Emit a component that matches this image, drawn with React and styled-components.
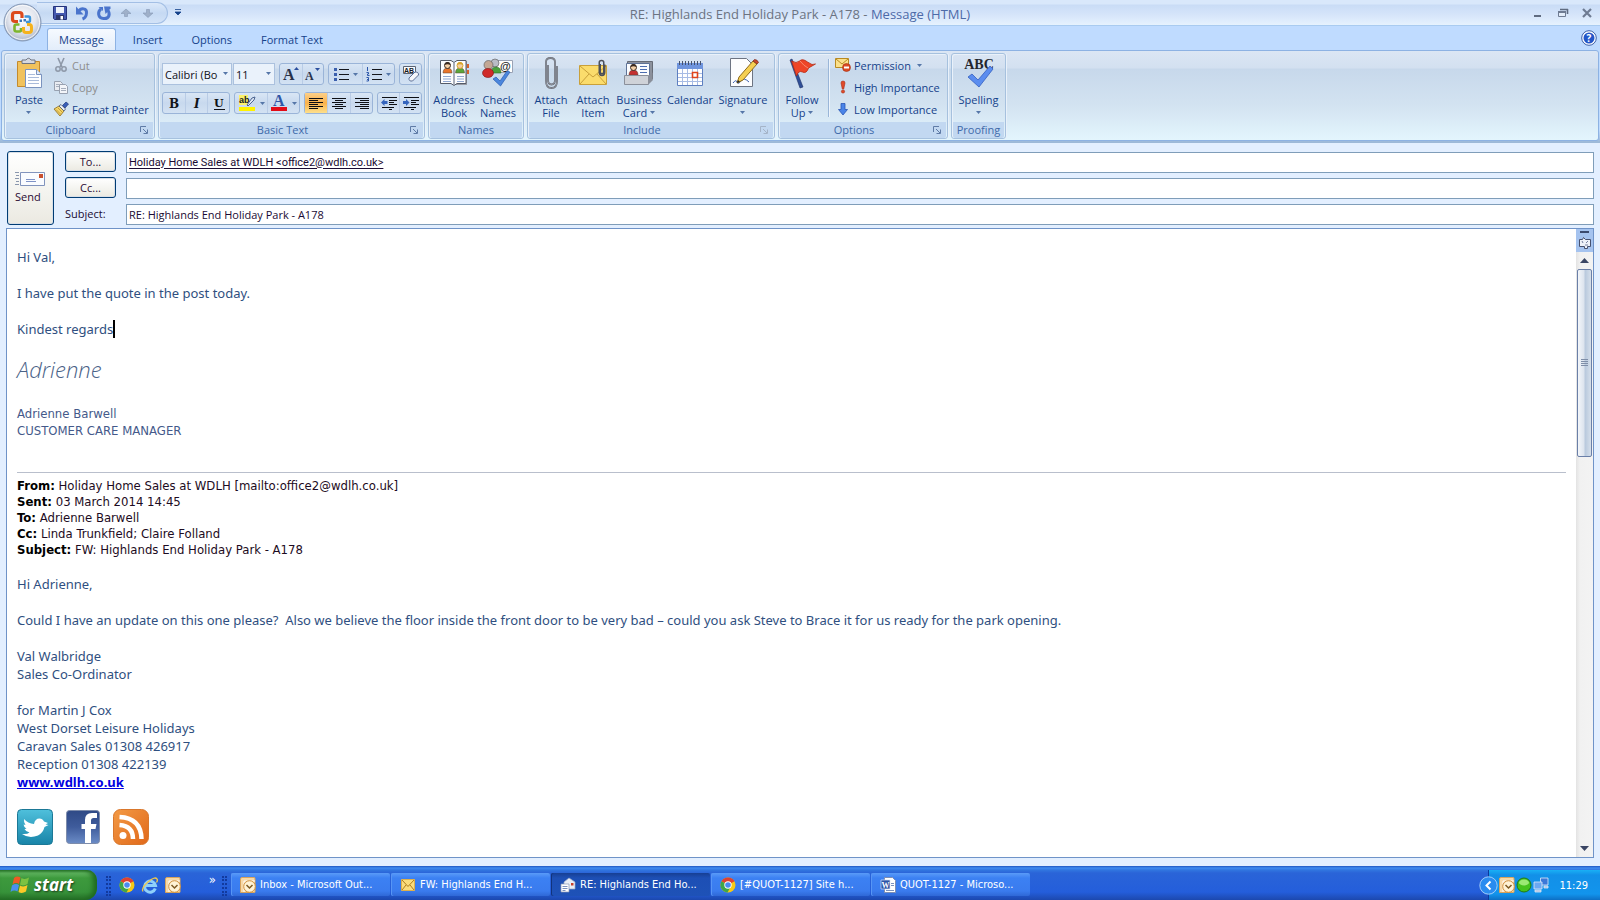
import React from 'react';
import styled, { createGlobalStyle } from 'styled-components';

const uiFont = "'Open Sans', 'Noto Sans', sans-serif";
const tahoma = "'DejaVu Sans Condensed', 'DejaVu Sans', sans-serif";

const GlobalStyle = createGlobalStyle`
  * {
    box-sizing: border-box;
  }

  body {
    margin: 0;
    background: #e3efff;
    font-family: ${uiFont};
    font-size: 11px;
    color: #15428b;
  }

  button,
  input,
  select {
    font: inherit;
    color: inherit;
    padding: 0;
    margin: 0;
    border: none;
    background: none;
  }

  svg {
    display: block;
    flex: none;
    overflow: visible;
  }
`;

const Window = styled.div`
  display: flex;
  flex-direction: column;
  min-height: 100vh;
`;

/* ---------- title bar ---------- */

const TitleBar = styled.header`
  position: relative;
  display: grid;
  grid-template-columns: 1fr auto 1fr;
  align-items: center;
  height: 26px;
  border-bottom: 1px solid #a9cbf0;
  background: linear-gradient(#d9e8fb 0, #d9e8fb 4px, #c9dcf6 5px, #d6e5fa 15px, #e6f2fe 25px);
`;

const OfficeButton = styled.button`
  position: absolute;
  z-index: 2;
  top: 3px;
  left: 3px;
  width: 39px;
  height: 39px;
`;

const QuickAccess = styled.div`
  display: flex;
  align-items: center;
  gap: 2px;
  padding-left: 37px;
`;

const QuickPill = styled.div`
  display: flex;
  align-items: center;
  gap: 6px;
  height: 22px;
  padding: 0 11px 0 15px;
  border: 1px solid #a3bfe5;
  border-left: none;
  border-radius: 0 11px 11px 0;
  background: linear-gradient(#dce9fa, #c5d9f3 50%, #d3e3f8);
`;

const IconButton = styled.button`
  display: flex;
  align-items: center;
  justify-content: center;
  width: 16px;
  height: 16px;
`;

const Title = styled.h1`
  margin: 0;
  padding-top: 3px;
  font-size: 13px;
  font-weight: 400;
  line-height: 18px;
  color: #6b7382;

  span {
    color: #4d6aa8;
  }
`;

const WindowButtons = styled.div`
  display: flex;
  justify-content: flex-end;
  gap: 9px;
  padding-right: 5px;
`;

const TabBar = styled.nav`
  display: flex;
  align-items: flex-end;
  gap: 5px;
  height: 24px;
  padding: 0 3px 0 47px;
  background: #bfdbff;
`;

const Tab = styled.button`
  height: 22px;
  padding: 0 11px;
  border: 1px solid ${props => (props.$active ? '#8db2e3' : 'transparent')};
  border-bottom: none;
  border-radius: 3px 3px 0 0;
  background: ${props => (props.$active ? 'linear-gradient(#f6faff, #e3edfa)' : 'none')};
  line-height: 20px;
`;

const HelpButton = styled(IconButton)`
  align-self: center;
  margin-left: auto;
`;

/* ---------- ribbon ---------- */

const RibbonArea = styled.div`
  padding: 0 1px 2px;
  background: linear-gradient(#bfdbff 0, #bfdbff 80px, #9db9d8 92px);
`;

const Ribbon = styled.div`
  display: flex;
  gap: 3px;
  padding: 2px 2px 1px;
  border: 1px solid #8db2e3;
  border-radius: 3px;
  background: linear-gradient(#dbe6f4 0, #d3e0f0 17px, #c7d8eb 18px, #d3e3f1 55px, #e3f5fd 88px);
`;

const Group = styled.section`
  display: flex;
  flex-direction: column;
  width: ${props => props.$width}px;
  height: 86px;
  border: 1px solid #a6c1de;
  border-radius: 3px;
  box-shadow: inset 1px 1px 0 #e9f1fa, 1px 0 0 #e9f1fa;
`;

const GroupBody = styled.div`
  display: flex;
  flex: 1;
  padding: ${props => props.$padding || '0 3px'};
`;

const GroupLabel = styled.div`
  display: flex;
  align-items: center;
  height: 16px;
  margin: 0 1px;
  padding-right: ${props => (props.$launcher ? 5 : 0)}px;
  border-radius: 0 0 2px 2px;
  background: #c2d8f1;
  color: #3e6aaa;
  line-height: 16px;
  text-align: center;

  span {
    flex: 1;
    white-space: nowrap;
    padding-right: ${props => (props.$launcher ? 5 : 0)}px;
  }
`;

const BigButton = styled.button`
  display: flex;
  flex-direction: column;
  align-items: center;
  gap: 4px;
  width: ${props => props.$width}px;
  padding-top: 3px;
  line-height: 13px;
  text-align: center;
`;

const BigLabel = styled.span`
  display: flex;
  flex-direction: column;
  align-items: center;
  white-space: nowrap;
`;

const LabelLine = styled.span`
  display: flex;
  align-items: center;
  gap: 3px;
  height: 13px;
`;

const SmallColumn = styled.div`
  display: flex;
  flex-direction: column;
  padding-left: 3px;
`;

const SmallButton = styled.button`
  display: flex;
  align-items: center;
  gap: 3px;
  height: 22px;
  white-space: nowrap;

  &:disabled {
    color: #8d8d8d;
  }
`;

const Divider = styled.div`
  width: 1px;
  height: 58px;
  margin: 5px 3px 0 6px;
  background: #9ab6d8;
  box-shadow: 1px 0 0 #edf4fc;
`;

const ToolRows = styled.div`
  display: flex;
  flex-direction: column;
  gap: 7px;
`;

const ToolRow = styled.div`
  display: flex;
  gap: 4px;
`;

const Combos = styled.div`
  display: flex;
  gap: 1px;
`;

const Combo = styled.div`
  position: relative;
  width: ${props => props.$width}px;

  select {
    width: 100%;
    height: 22px;
    padding: 0 10px 0 2px;
    border: 1px solid #abc1de;
    border-radius: 0;
    background: #eaf2fb;
    color: #101018;
    appearance: none;
    overflow: hidden;
  }

  svg {
    position: absolute;
    top: 9px;
    right: 4px;
    pointer-events: none;
  }
`;

const ButtonSet = styled.div`
  display: flex;
  height: 22px;
  border: 1px solid #9ab4d8;
  border-radius: 3px;
  background: linear-gradient(#d9e6f5, #c8d9ee 50%, #d3e2f3);
`;

const Tool = styled.button`
  display: flex;
  align-items: center;
  justify-content: center;
  gap: 4px;
  width: ${props => props.$width || 22}px;
  background: ${props => (props.$on ? 'linear-gradient(#fcd08a, #f9b24c 50%, #fde08c)' : 'none')};

  & + & {
    border-left: 1px solid #b9cce6;
  }
`;

/* ---------- address fields ---------- */

const Envelope = styled.form`
  display: flex;
  gap: 11px;
  padding: 8px 6px 3px 7px;
`;

const dialogButton = `
  border: 1px solid #003c74;
  border-radius: 3px;
  background: linear-gradient(#ffffff, #f3f3ee 60%, #ebe9e1);
  box-shadow: inset 0 0 0 1px #d9dfe6;
  color: #2a0b33;
`;

const SendButton = styled.button`
  ${dialogButton}
  display: flex;
  flex-direction: column;
  align-items: flex-start;
  justify-content: center;
  gap: 2px;
  width: 47px;
  height: 74px;
  padding-left: 7px;
  line-height: 16px;
`;

const Fields = styled.div`
  display: grid;
  flex: 1;
  grid-template-columns: 51px 1fr;
  grid-auto-rows: 21px;
  gap: 5px 10px;
`;

const FieldButton = styled.button`
  ${dialogButton}
`;

const SubjectLabel = styled.label`
  line-height: 21px;
  color: #1a0b33;
`;

const Field = styled.input`
  min-width: 0;
  width: 100%;
  margin-top: 1px;
  height: 21px;
  padding: 0 2px 1px;
  border: 1px solid #7f9db9;
  background: #fff;
  color: #1a0b33;

  &[name='to'] {
    font-family: Roboto, sans-serif;
    text-decoration: underline;
    text-underline-offset: 2px;
  }
`;

/* ---------- message body ---------- */

const Editor = styled.main`
  display: flex;
  flex: 1;
  margin: 0 6px 8px;
  border: 1px solid #6f93c8;
  background: #fff;
`;

const Message = styled.article`
  flex: 1;
  padding: 19px 10px 12px;
  font-family: 'Noto Sans', sans-serif;
  font-size: 13px;
  line-height: 18px;
  color: #2f4f80;
`;

const Paragraph = styled.p`
  margin: 0 0 18px;
  white-space: pre-line;
`;

const Caret = styled.span`
  display: inline-block;
  width: 2px;
  height: 18px;
  background: #000;
  vertical-align: top;
`;

const Signature = styled.p`
  margin: 0 0 23px;
  font: italic 300 22px/26px 'Bradley Hand ITC', 'Open Sans', cursive;
  color: #4a6287;
`;

const Sender = styled.p`
  margin: 0 0 33px;
  font-family: ${tahoma};
  line-height: 17px;
  white-space: pre-line;
  color: #44598a;
`;

const QuotedHeader = styled.div`
  margin-bottom: 17px;
  padding-top: 5px;
  border-top: 1px solid #b9bfcc;
  font-family: ${tahoma};
  line-height: 16px;
  color: #1d0b22;

  b {
    color: #000;
  }
`;

const WebLink = styled.a`
  font-weight: 700;
  color: #0000e0;
`;

const Social = styled.div`
  display: flex;
  gap: 12px;
`;

const SocialLink = styled.a`
  display: block;
`;

const ScrollBar = styled.div`
  display: flex;
  flex-direction: column;
  align-items: center;
  width: 17px;
  background: linear-gradient(90deg, #e3e3e3, #f1f1f1 4px, #f3f3f3);
`;

const BrowseButton = styled.button`
  display: flex;
  flex-direction: column;
  align-items: center;
  gap: 4px;
  width: 17px;
  height: 23px;
  padding-top: 2px;
  background: #a5c3ef;
`;

const ArrowButton = styled.button`
  display: flex;
  align-items: center;
  justify-content: center;
  width: 17px;
  height: 17px;
`;

const Thumb = styled.div`
  display: flex;
  align-items: center;
  justify-content: center;
  width: 15px;
  height: 188px;
  border: 1px solid #6a7fa8;
  border-radius: 2px;
  background: linear-gradient(90deg, #f3f6fa, #dde4ee 45%, #b9c9dd 55%, #d5dfeb);
`;

const Track = styled.div`
  flex: 1;
`;

/* ---------- taskbar ---------- */

const Taskbar = styled.footer`
  display: flex;
  align-items: stretch;
  height: 34px;
  background: linear-gradient(#1f55c0 0, #3f8bf0 2px, #3176e0 4px, #2a64d8 7px, #245edb 26px, #1c48ae 34px);
  font-family: ${tahoma};
  color: #fff;
`;

const StartButton = styled.button`
  display: flex;
  flex: none;
  align-items: center;
  gap: 4px;
  width: 97px;
  height: 30px;
  margin-top: 4px;
  padding-left: 10px;
  border-radius: 0 10px 12px 0;
  background: linear-gradient(#2f7d2f 0, #5fb45f 3px, #3d9a3d 8px, #37933a 22px, #256f27 30px);
  box-shadow: inset -4px 0 5px #1f6a20;
  font: italic 700 17px/26px 'Open Sans', sans-serif;
  color: #fff;
  text-shadow: 1px 1px 2px #1c3d1c;
`;

const Grip = styled.div`
  flex: none;
  align-self: stretch;
  width: 5px;
  margin: 10px 0 4px;
  border-left: 2px dotted #123a9e;
  border-right: 2px dotted #123a9e;
`;

const QuickLaunch = styled.div`
  display: flex;
  flex: none;
  align-items: stretch;
  width: 130px;
  padding-left: 9px;
`;

const QuickIcons = styled.div`
  display: flex;
  flex: 1;
  align-items: center;
  gap: 7px;
  padding: 4px 6px 0 8px;
`;

const Chevrons = styled.span`
  margin: 0 0 10px auto;
  font-size: 13px;
  line-height: 12px;
`;

const Tasks = styled.div`
  display: flex;
  flex: 1;
  gap: 1px;
  padding: 7px 0 4px 4px;
`;

const Task = styled.button`
  display: flex;
  align-items: center;
  gap: 4px;
  width: 159px;
  padding-left: 9px;
  border-radius: 2px;
  white-space: nowrap;
  background: ${props =>
    props.$active
      ? 'linear-gradient(#173f93, #1d4fb5 5px, #1e52b7)'
      : 'linear-gradient(#5a9bf8, #3c81f3 5px, #3a7bee 18px, #2f68d6)'};
  box-shadow: inset 1px 0 0 ${props => (props.$active ? '#12337c' : '#5795f5')};
`;

const Tray = styled.div`
  display: flex;
  align-items: center;
  gap: 1px;
  padding: 0 12px 0 0;
  margin-top: 4px;
  border-left: 1px solid #0c3a9c;
  background: linear-gradient(#19b0f5 0, #1290e8 5px, #1294ec 24px, #0d6fc4 30px);

  > button {
    margin-left: -10px;
  }
`;

const Clock = styled.time`
  margin-left: 9px;
`;

/* ---------- icons ---------- */

const Icon = ({ size = 16, w = size, h = size, children }) => (
  <svg width={w} height={h} viewBox={`0 0 ${w} ${h}`} aria-hidden="true">
    {children}
  </svg>
);

const DownArrow = ({ color = '#5576a8' }) => (
  <Icon w={5} h={3}>
    <path d="M0 0h5L2.500 3z" fill={color} />
  </Icon>
);

const LauncherIcon = ({ color = '#5f7ba6' }) => (
  <Icon size={8}>
    <path d="M.5 6V.5H6M3 3l4 4M7.500 3.500v4h-4" fill="none" stroke={color} />
  </Icon>
);

const OfficeOrb = () => (
  <Icon size={39}>
    <defs>
      <radialGradient id="orb" cx=".5" cy=".4" r=".6">
        <stop offset="0" stopColor="#fff" />
        <stop offset=".6" stopColor="#e3e6ee" />
        <stop offset="1" stopColor="#a9b4c8" />
      </radialGradient>
    </defs>
    <circle cx="19.500" cy="19.500" r="18.500" fill="url(#orb)" stroke="#8397b5" />
    <circle cx="19.500" cy="19.500" r="17" fill="none" stroke="#fff" opacity=".8" />
    <g fill="none">
      <path d="M15 18.500h-3q-2.500 0-2.500-2.500v-4q0-2.500 2.500-2.500h4.500q2.500 0 2.500 2.500v3" stroke="#dc4a1c" strokeWidth="3.200" />
      <path d="M21.500 13.500h4q1.500 0 1.500 1.500v2.500q0 1.500-1.500 1.500H23" stroke="#3f94d8" strokeWidth="2.400" />
      <path d="M16.500 21.500h-3q-2 0-2 2v3q0 2 2 2h3q1.500 0 1.500-1.500V25" stroke="#7db52d" strokeWidth="2.600" />
      <path d="M24 21.500h2q2.500 0 2.500 2.500v3q0 2.500-2.500 2.500h-3q-2.500 0-2.500-2.500v-3" stroke="#f5b21c" strokeWidth="3" />
    </g>
    <path d="M16.500 16.500h2.500v2.500h-2.500zM20.500 16h2.500v2.500h-2.500z" fill="#3a77bd" />
  </Icon>
);

const SaveIcon = () => (
  <Icon>
    <path d="M1.500 1.500h13v13h-12l-1-1z" fill="#4459b0" stroke="#25337c" />
    <path d="M4 2h8v6H4z" fill="#eef3fc" />
    <path d="M4 10h8v5H4z" fill="#2b376e" />
    <path d="M8.500 11H11v3.500H8.500z" fill="#fff" />
  </Icon>
);

const UndoIcon = () => (
  <Icon>
    <path d="M4.500 6.500C7 2.500 13 3 12.500 8c-.2 3-1.500 5-4 6" fill="none" stroke="#4a74cc" strokeWidth="3" />
    <path d="M2 1.500v8h7.500z" fill="#4a74cc" />
  </Icon>
);

const RedoIcon = () => (
  <Icon>
    <path d="M5 4c-3.500 2.500-3.500 9 2.500 9.500S14.500 9 11.500 4.500" fill="none" stroke="#4a74cc" strokeWidth="3" />
    <path d="M8 1.500h6.500v2L9.500 9z" fill="#4a74cc" />
    <path d="M2.500 2h4.500v4z" fill="#4a74cc" />
  </Icon>
);

const NavIcon = ({ down }) => (
  <Icon>
    <path
      d={down ? 'M6.500 4.500h3v3.500h3.500L8 12.500 3 8h3.500z' : 'M6.500 11.500h3V8.500h3.500L8 4 3 8.500h3.500z'}
      fill="#9fb0c9"
      stroke="#8799b5"
      strokeWidth=".6"
    />
  </Icon>
);

const PasteIcon = () => (
  <Icon size={32}>
    <path d="M4.500 4.500h22v25h-22z" fill="#f1c25c" stroke="#c48a2c" />
    <path d="M9 6.500V3h4q2.500-3.500 5 0h4v3.500z" fill="#d5d8df" stroke="#6f7480" />
    <path d="M12.500 12.500h11l5 5v13h-16z" fill="#fdfeff" stroke="#7a93bf" />
    <path d="M23.500 12.500v5h5" fill="#dfe9f8" stroke="#7a93bf" />
    <path d="M15 17.500h7M15 20.500h11M15 23.500h11M15 26.500h11" stroke="#a9bbda" />
  </Icon>
);

const CutIcon = () => (
  <Icon>
    <path d="M5 1l4 9M11 1L7 10" stroke="#8e98a8" strokeWidth="1.600" />
    <g fill="none" stroke="#8e98a8" strokeWidth="1.500">
      <circle cx="5" cy="12" r="2.200" />
      <circle cx="11" cy="12" r="2.200" />
    </g>
  </Icon>
);

const CopyIcon = () => (
  <Icon>
    <path d="M1.500 2.500h6l2 2v7h-8z" fill="#e9ecf2" stroke="#98a1b0" />
    <path d="M6.500 5.500h6l2 2v7h-8z" fill="#f3f5f9" stroke="#98a1b0" />
    <path d="M8 9.500h5M8 11.500h5M3 5.500h3M3 7.500h3" stroke="#a7afbd" />
  </Icon>
);

const PainterIcon = () => (
  <Icon>
    <path d="M1 8l5-3 5 5-4 5z" fill="#f4d56a" stroke="#8a6a1c" strokeWidth=".8" />
    <path d="M3 8.500l5 5M5 7l5 5" stroke="#b98f2c" strokeWidth=".8" />
    <path d="M6 5l2-1.500 4.500 4.500L11 10z" fill="#eef1f6" stroke="#4a5570" strokeWidth=".8" />
    <path d="M9.500 4.500L13 1l2.500 2-3.500 4z" fill="#3a5fb8" stroke="#223a7a" strokeWidth=".7" />
  </Icon>
);

const FontSizeIcon = ({ up }) => (
  <Icon>
    <text x="0" y="14" fontFamily="Liberation Serif" fontWeight="700" fontSize={up ? 16 : 12} fill="#28324a">A</text>
    <path d={up ? 'M11 4h5l-2.500-3z' : 'M10 2h5l-2.500 3z'} fill="#2b4f9e" />
  </Icon>
);

const ListIcon = ({ numbered }) => (
  <Icon>
    <path d="M6 3.500h10M6 8.500h10M6 13.500h10" stroke="#14161c" />
    {numbered ? (
      <path d="M1.500 1v4M.5 6.500h2v1.500h-1v1.500h2M.5 11.500h2v3.500h-2M1 13.500h1" fill="none" stroke="#2d57ab" />
    ) : (
      <path d="M1 2h3v3H1zM1 7h3v3H1zM1 12h3v3H1z" fill="#3a5fae" />
    )}
  </Icon>
);

const ClearIcon = () => (
  <Icon size={18}>
    <path d="M1.500 1.500h12v7h-12z" fill="#f8fafd" stroke="#5b6475" />
    <text x="2" y="8" fontFamily="Liberation Sans" fontWeight="700" fontSize="7" fill="#16181e">AB</text>
    <path d="M7 13l6-6q4 0 3.500 3l-6 6q-4 .5-3.500-3z" fill="#f4f6fa" stroke="#5c6f95" />
  </Icon>
);

const HighlightIcon = () => (
  <Icon size={18}>
    <path d="M1 1h9v10H1z" fill="#fbf26a" />
    <text x="1" y="9" fontFamily="Liberation Sans" fontWeight="700" fontSize="9" fill="#202020">ab</text>
    <path d="M9 11l5-7 3-1-1 3-6 6z" fill="#dfe8f5" stroke="#4b6490" />
    <path d="M1 13h16v4H1z" fill="#fff200" />
  </Icon>
);

const FontColorIcon = () => (
  <Icon size={18}>
    <text x="3" y="12" fontFamily="Liberation Serif" fontWeight="700" fontSize="16" fill="#2f56a6">A</text>
    <path d="M1 13h16v4H1z" fill="#e30b17" />
  </Icon>
);

const alignPaths = {
  left: 'M1 3.500h14M1 5.500h9M1 7.500h14M1 9.500h9M1 11.500h14M1 13.500h9',
  center: 'M1 3.500h14M4 5.500h8M1 7.500h14M4 9.500h8M1 11.500h14M4 13.500h8',
  right: 'M1 3.500h14M6 5.500h9M1 7.500h14M6 9.500h9M1 11.500h14M6 13.500h9',
};

const AlignIcon = ({ side }) => (
  <Icon>
    <path d={alignPaths[side]} stroke="#0d0f14" />
  </Icon>
);

const IndentIcon = ({ more }) => (
  <Icon>
    <path d="M1 2.500h15M8 5.500h8M8 7.500h5M8 9.500h8M1 12.500h12M8 14.500h3" stroke="#0d0f14" strokeWidth="1.200" />
    <path d={more ? 'M6.500 7.500L3 4v2H0v3h3v2z' : 'M0 7.500L3.500 4v2h3v3h-3v2z'} fill="#3565bd" />
  </Icon>
);

const Person = ({ x, y, shirt, hair }) => (
  <g transform={`translate(${x} ${y})`}>
    <path d="M0 11q0-5 4.500-5T9 11z" fill={shirt} stroke="#5a4030" strokeWidth=".5" />
    <circle cx="4.500" cy="3.500" r="3" fill="#f4cfa6" stroke={hair} />
    <path d="M1.500 3q.5-3 3-3t3 3q-3-1.500-6 0z" fill={hair} />
  </g>
);

const AddressBookIcon = () => (
  <Icon size={32}>
    <path d="M29 4v24H18V4z" fill="#9a9da6" />
    <path d="M30 7v4M30 13v4" stroke="#d8642c" strokeWidth="2" />
    <path d="M2.500 3.500H13l3 2 3-2h9v23h-9l-3 2-3-2H2.500z" fill="#fdfdfe" stroke="#555b68" />
    <path d="M16 5v23" stroke="#8c93a2" strokeWidth="1.500" />
    <Person x="5" y="5" shirt="#e8742a" hair="#3a2a20" />
    <Person x="17.500" y="5" shirt="#5aa63a" hair="#d9a62c" />
    <path d="M5 19.500h8M5 22h8M5 24.500h8M19 19.500h7M19 22h7M19 24.500h7" stroke="#8fa6cf" />
  </Icon>
);

const CheckNamesIcon = () => (
  <Icon size={32}>
    <path d="M14.500 3.500h16v12h-16z" fill="#fff" stroke="#9aa3b5" />
    <text x="18" y="13" fontFamily="Liberation Sans" fontWeight="700" fontSize="11" fill="#1d1f26">@</text>
    <g strokeWidth=".6">
      <circle cx="13" cy="6" r="4" fill="#b9bcc6" stroke="#555" />
      <path d="M10 16q-1-6 4-6 5 0 5 6z" fill="#4aa23c" stroke="#2c6b24" />
      <circle cx="6.500" cy="8" r="4.500" fill="#c2a795" stroke="#555" />
      <ellipse cx="6" cy="16" rx="5.500" ry="4.500" fill="#cf2a2a" stroke="#7d1515" />
    </g>
    <path d="M11 22l3-2 4 4L25 14l3 1-9.500 14z" fill="#4b86dd" stroke="#2a5db0" strokeWidth=".7" />
  </Icon>
);

const ClipPath = 'M4.500 8v15q0 4.500 3.500 4.500t3.500-4.500V5Q11.500 1 7 1T2.500 5v19q0 7 5.500 7t5.500-7V9';

const AttachFileIcon = () => (
  <Icon size={32}>
    <g transform="translate(8.500 0)">
      <path d={ClipPath} fill="none" stroke="#60646e" strokeWidth="1.800" />
      <path d={ClipPath} fill="none" stroke="#b3b7c0" strokeWidth=".6" />
    </g>
  </Icon>
);

const AttachItemIcon = () => (
  <Icon size={32}>
    <path d="M2.500 8.500h27v19h-27z" fill="#fbdc6c" stroke="#c9a03a" />
    <path d="M3 9l13 11L29 9M3 27l9-10M29 27l-9-10" fill="none" stroke="#c9a03a" />
    <g transform="translate(21 3) scale(.5)">
      <path d={ClipPath} fill="none" stroke="#4c505a" strokeWidth="3" />
    </g>
  </Icon>
);

const BusinessCardIcon = () => (
  <Icon size={32}>
    <path d="M26 10l4-4v16l-6 6z" fill="#6f7480" />
    <path d="M4.500 4.500h25v17h-25z" fill="#8d929d" stroke="#666b76" />
    <path d="M3.500 6.500h23v15h-23z" fill="#fbfcfe" stroke="#5f7397" />
    <Person x="6" y="7" shirt="#c43030" hair="#3a2a20" />
    <path d="M17 9.500h7M17 12.500h7M17 15.500h7" stroke="#4d6eb0" />
    <path d="M1.500 18.500h24v9h-24z" fill="#cfd2d8" stroke="#8a8f9a" />
    <path d="M25.500 18.500l4-3v8l-4 4z" fill="#8a8f9a" />
  </Icon>
);

const CalendarIcon = () => (
  <Icon size={32}>
    <path d="M3.500 6.500h25v22h-25z" fill="#fff" stroke="#5e7fc0" />
    <path d="M3 6h26v6H3z" fill="#6f94dd" />
    <path d="M5.500 4v4M8.500 4v4M11.500 4v4M14.500 4v4M17.500 4v4M20.500 4v4M23.500 4v4M26.500 4v4" stroke="#46526e" />
    <path d="M8.500 12v16M13.500 12v16M18.500 12v16M23.500 12v16M4 16.500h24M4 20.500h24M4 24.500h24" stroke="#a8bce4" />
    <path d="M18.500 15.500h5v5h-5z" fill="#fff" stroke="#e0441c" strokeWidth="1.600" />
  </Icon>
);

const SignatureIcon = () => (
  <Icon size={32}>
    <path d="M3.500 1.500h16l6 6v22h-22z" fill="#fdfdfe" stroke="#6d7482" />
    <path d="M6 26q3-4 4-1t4-1 8 1" fill="none" stroke="#3c5fae" />
    <path d="M10 26l2-6L26 4l4 3-14 16z" fill="#f5cf52" stroke="#8f6a1a" />
    <path d="M26 4l1.500-1.500q3 0 4 3L30 7z" fill="#c8482c" stroke="#7b2a1a" strokeWidth=".7" />
    <path d="M10 26l1-3 2 2z" fill="#222" />
  </Icon>
);

const FlagIcon = () => (
  <Icon size={32}>
    <path d="M4 3l2-1 11 28-3 1z" fill="#2f4f97" stroke="#1c2f66" strokeWidth=".6" />
    <path d="M5.500 4q5 3 8 0t8 1 8 2l-7 4q-2 6-6 4t-6 4z" fill="#ee4527" stroke="#b52a12" strokeWidth=".8" />
    <path d="M14 4q4 5 8 7" stroke="#f98a6c" fill="none" />
  </Icon>
);

const PermissionIcon = () => (
  <Icon>
    <path d="M.5 1.500h13v9H.5z" fill="#fbe08a" stroke="#b98a22" />
    <path d="M1 2l6 5 6-5" fill="none" stroke="#b98a22" />
    <circle cx="11.500" cy="10.500" r="4" fill="#dc4a22" stroke="#a02c10" strokeWidth=".6" />
    <path d="M9 9.500h5v2H9z" fill="#fff" />
  </Icon>
);

const HighIcon = () => (
  <Icon>
    <path d="M6 4q0-2 2-2t2 2l-1.300 6H7.300z" fill="#e04a2a" stroke="#a92b12" strokeWidth=".6" />
    <circle cx="8" cy="12.500" r="1.600" fill="#e04a2a" stroke="#a92b12" strokeWidth=".6" />
  </Icon>
);

const LowIcon = () => (
  <Icon>
    <path d="M6 2.500h4v6h2.500L8 14 3.500 8.500H6z" fill="#4a84e8" stroke="#2a55b5" strokeWidth=".8" />
  </Icon>
);

const SpellingIcon = () => (
  <Icon size={32}>
    <text x="16" y="12" textAnchor="middle" fontFamily="Liberation Serif" fontWeight="700" fontSize="14" fill="#23262e">ABC</text>
    <path d="M5 20l4-3 6 6L27 9l3 3-14 18z" fill="#5b8def" stroke="#3460c0" strokeWidth=".8" />
  </Icon>
);

const HelpIcon = () => (
  <Icon>
    <circle cx="8" cy="8" r="7.300" fill="#fff" stroke="#3c5fa8" />
    <circle cx="8" cy="8" r="5.500" fill="#2456c8" />
    <text x="8" y="12" textAnchor="middle" fontFamily="Open Sans" fontWeight="700" fontSize="10" fill="#fff">?</text>
  </Icon>
);

const SendIcon = () => (
  <Icon w={30} h={16}>
    <path d="M5.500 1.500h24v13h-24z" fill="#fafcff" stroke="#8194bd" />
    <path d="M0 1.500h4M1 4.500h3M0 7.500h4M1 10.500h3M0 13.500h4" stroke="#8a97ad" />
    <path d="M24 3h4v4h-4z" fill="#c8502f" />
    <path d="M11 8.500h9M11 10.500h10" stroke="#7f93c6" />
  </Icon>
);

const TwitterIcon = () => (
  <Icon size={36}>
    <defs>
      <linearGradient id="tw" x2="0" y2="1">
        <stop offset="0" stopColor="#4fc0dc" />
        <stop offset="1" stopColor="#1884a8" />
      </linearGradient>
    </defs>
    <rect x=".5" y=".5" width="35" height="35" rx="4" fill="url(#tw)" stroke="#1b7896" />
    <path
      d="M5 25q5 .5 7.500-1.500-3.500-.5-5-3.500l2-.2Q7 18.500 6.500 15.500l2 .4Q6.500 13 7 10q4 4.500 10 5 1-5.500 5.500-5.500 3 0 4.500 3l4 1.500-2.500 1.500 3 .5-4 2Q26 24 21 26.500 12 30 5 25z"
      fill="#fff"
    />
  </Icon>
);

const FacebookIcon = () => (
  <Icon size={36}>
    <defs>
      <linearGradient id="fb" x2="0" y2="1">
        <stop offset="0" stopColor="#2f4a86" />
        <stop offset=".5" stopColor="#3f5c9c" />
        <stop offset="1" stopColor="#6b8cc6" />
      </linearGradient>
    </defs>
    <rect x="1.500" y="1.500" width="33" height="33" rx="3" fill="url(#fb)" stroke="#7d8cab" />
    <path d="M20 34V20h-3.500v-5H20v-4q0-7 7-7h5v5h-3.500q-2.500 0-2.500 2.500V15h5.500l-1 5H26v14z" fill="#fff" />
  </Icon>
);

const RssIcon = () => (
  <Icon size={36}>
    <defs>
      <linearGradient id="rss" x2="1" y2="1">
        <stop offset="0" stopColor="#f39a45" />
        <stop offset="1" stopColor="#e0681a" />
      </linearGradient>
    </defs>
    <rect x=".5" y=".5" width="35" height="35" rx="7" fill="url(#rss)" stroke="#d9772c" />
    <circle cx="10" cy="26.500" r="3.500" fill="#fff" />
    <path d="M6.500 16Q20 17 20 30M6.500 8Q28 9 28.500 30" fill="none" stroke="#fff" strokeWidth="4.500" />
  </Icon>
);

const WindowsFlag = () => (
  <Icon size={20}>
    <path d="M4 3q3-2.500 6.500-.5L9 9Q6 7 2.500 9.500z" fill="#ee5a24" />
    <path d="M11.500 3q3.500 2 7.500-.5L17.500 9q-4 2.500-7.500.5z" fill="#7cc242" />
    <path d="M2 10.500Q5.500 8 9 10l-1.500 6.500q-3.500-2-7 .5z" fill="#4a90ee" />
    <path d="M10 10.500q3.500 2 7.500-.5L16 16.500q-4 2.500-7.500.5z" fill="#fbc928" />
  </Icon>
);

const ChromeIcon = () => (
  <Icon>
    <circle cx="8" cy="8" r="7.500" fill="#f6c915" />
    <path d="M8 8L1.500 4.250A7.500 7.500 0 0 1 14.500 4.250z" fill="#dd4132" />
    <path d="M8 8L1.500 4.250A7.500 7.500 0 0 0 7.500 15.500L11 9z" fill="#3fa648" />
    <circle cx="8" cy="8" r="3.700" fill="#fff" />
    <circle cx="8" cy="8" r="2.800" fill="#4a8af0" />
  </Icon>
);

const IeIcon = () => (
  <Icon>
    <path d="M13.300 11.500A5.500 5.500 0 1 1 13.500 8.500H4" fill="none" stroke="#8fd0fb" strokeWidth="3" />
    <path d="M1 14.500Q-1 11 6 5t9-3q1 1-.5 3.500" fill="none" stroke="#f2c94a" strokeWidth="1.300" />
  </Icon>
);

const OutlookIcon = () => (
  <Icon>
    <path d="M.5 15.500V2q0-1.500 1.500-1.500h12q1 0 1 1V15q0 .5-.5.500z" fill="#f7d9a8" stroke="#d9a45c" />
    <path d="M4 15V4h11" fill="none" stroke="#fff" />
    <circle cx="9.500" cy="9.500" r="5.800" fill="#fff3d6" stroke="#d08f3a" />
    <path d="M6.500 8l3 3 3-3" fill="none" stroke="#7d5a24" strokeWidth="1.500" />
  </Icon>
);

const MailIcon = () => (
  <Icon>
    <path d="M1.500 2.500h13v11h-13z" fill="#fbdc7c" stroke="#e0b04a" />
    <path d="M2 3l6 6.500L14 3M2 13l4-5M14 13l-4-5" fill="none" stroke="#b07c1c" />
  </Icon>
);

const ComposeIcon = () => (
  <Icon>
    <path d="M4 5l5-4 6 4v7H4z" fill="#e9eef6" stroke="#9aa9c4" strokeWidth=".7" />
    <path d="M1 7h8v8H1z" fill="#fff" stroke="#8797b5" strokeWidth=".7" />
    <path d="M2.500 9.500h5M2.500 11.500h5M2.500 13.500h3" stroke="#7a90bd" />
    <path d="M11 6h2.500v2.500H11z" fill="#c8402a" />
  </Icon>
);

const WordIcon = () => (
  <Icon>
    <path d="M4.500.5h8l3 3v12h-11z" fill="#fff" stroke="#7d8db3" />
    <path d="M1 3h9v9H1z" fill="#2d56a8" stroke="#d9e3f5" strokeWidth=".7" />
    <text x="5.500" y="10.500" textAnchor="middle" fontFamily="Liberation Serif" fontWeight="700" fontSize="8" fill="#fff">W</text>
    <path d="M11 6.500h3M11 8.500h3M6 13.500h8" stroke="#7a90bd" />
  </Icon>
);

const PresenceIcon = () => (
  <Icon>
    <circle cx="8" cy="8" r="7" fill="#46c21c" stroke="#1f7a14" />
    <ellipse cx="8" cy="5.500" rx="5" ry="3" fill="#b2f28a" opacity=".8" />
  </Icon>
);

const NetworkIcon = () => (
  <Icon>
    <g stroke="#dfe9f8" strokeWidth=".8">
      <path d="M7.500 1h7.500v7H7.500z" fill="#3c78d8" />
      <path d="M1 5h8v7H1z" fill="#6aa8f2" />
      <path d="M2 13h6v2H2zM11 9h4v2h-4z" fill="#a9bede" />
    </g>
  </Icon>
);

const TrayArrow = () => (
  <Icon size={19}>
    <circle cx="9.500" cy="9.500" r="8.700" fill="#2a8cf0" stroke="#bfe0fd" strokeWidth=".8" />
    <path d="M11.500 5.500l-4 4 4 4" fill="none" stroke="#fff" strokeWidth="2" />
  </Icon>
);

/* ---------- parts ---------- */

const RibbonGroup = ({ name, width, padding, launcher, children }) => (
  <Group $width={width}>
    <GroupBody $padding={padding}>{children}</GroupBody>
    <GroupLabel $launcher={Boolean(launcher)}>
      <span>{name}</span>
      {launcher && <LauncherIcon color={launcher === 'off' ? '#a5b4c8' : undefined} />}
    </GroupLabel>
  </Group>
);

const Big = ({ icon, lines, width, arrow }) => (
  <BigButton type="button" $width={width}>
    {icon}
    <BigLabel>
      {lines.map((line, i) => (
        <LabelLine key={line}>
          {line}
          {arrow === 'inline' && i === lines.length - 1 && <DownArrow />}
        </LabelLine>
      ))}
      {arrow === 'below' && <LabelLine><DownArrow /></LabelLine>}
    </BigLabel>
  </BigButton>
);

const tabs = ['Message', 'Insert', 'Options', 'Format Text'];

const quoted = [
  ['From:', 'Holiday Home Sales at WDLH [mailto:office2@wdlh.co.uk]'],
  ['Sent:', '03 March 2014 14:45'],
  ['To:', 'Adrienne Barwell'],
  ['Cc:', 'Linda Trunkfield; Claire Folland'],
  ['Subject:', 'FW: Highlands End Holiday Park - A178'],
];

const tasks = [
  { icon: <OutlookIcon />, label: 'Inbox - Microsoft Out...' },
  { icon: <MailIcon />, label: 'FW: Highlands End H...' },
  { icon: <ComposeIcon />, label: 'RE: Highlands End Ho...', active: true },
  { icon: <ChromeIcon />, label: '[#QUOT-1127] Site h...' },
  { icon: <WordIcon />, label: 'QUOT-1127 - Microso...' },
];

const RibbonBar = () => (
  <RibbonArea>
    <Ribbon>
      <RibbonGroup name="Clipboard" width={151} launcher="on">
        <Big icon={<PasteIcon />} lines={['Paste']} width={42} arrow="below" />
        <SmallColumn>
          <SmallButton disabled><CutIcon />Cut</SmallButton>
          <SmallButton disabled><CopyIcon />Copy</SmallButton>
          <SmallButton><PainterIcon />Format Painter</SmallButton>
        </SmallColumn>
      </RibbonGroup>

      <RibbonGroup name="Basic Text" width={267} padding="9px 3px 0" launcher="on">
        <ToolRows>
          <ToolRow>
            <Combos>
              <Combo $width={70}>
                <select aria-label="Font"><option>Calibri (Bo</option></select>
                <DownArrow />
              </Combo>
              <Combo $width={42}>
                <select aria-label="Font size"><option>11</option></select>
                <DownArrow />
              </Combo>
            </Combos>
            <ButtonSet>
              <Tool aria-label="Grow font"><FontSizeIcon up /></Tool>
              <Tool $width={21} aria-label="Shrink font"><FontSizeIcon /></Tool>
            </ButtonSet>
            <ButtonSet>
              <Tool $width={33} aria-label="Bullets"><ListIcon /><DownArrow /></Tool>
              <Tool $width={32} aria-label="Numbering"><ListIcon numbered /><DownArrow /></Tool>
            </ButtonSet>
            <ButtonSet>
              <Tool $width={21} aria-label="Clear formatting"><ClearIcon /></Tool>
            </ButtonSet>
          </ToolRow>
          <ToolRow>
            <ButtonSet>
              <Tool aria-label="Bold">
                <Icon><text x="3" y="13" fontFamily="DejaVu Serif" fontWeight="700" fontSize="12" fill="#101218">B</text></Icon>
              </Tool>
              <Tool aria-label="Italic">
                <Icon><text x="5" y="13" fontFamily="DejaVu Serif" fontWeight="700" fontStyle="italic" fontSize="12" fill="#101218">I</text></Icon>
              </Tool>
              <Tool aria-label="Underline">
                <Icon>
                  <text x="3" y="12" fontFamily="DejaVu Serif" fontWeight="700" fontSize="11" fill="#101218">U</text>
                  <path d="M3 14.500h11" stroke="#101218" />
                </Icon>
              </Tool>
            </ButtonSet>
            <ButtonSet>
              <Tool $width={32} aria-label="Highlight"><HighlightIcon /><DownArrow /></Tool>
              <Tool $width={32} aria-label="Font colour"><FontColorIcon /><DownArrow /></Tool>
            </ButtonSet>
            <ButtonSet>
              <Tool $on aria-label="Align left"><AlignIcon side="left" /></Tool>
              <Tool $width={23} aria-label="Centre"><AlignIcon side="center" /></Tool>
              <Tool aria-label="Align right"><AlignIcon side="right" /></Tool>
            </ButtonSet>
            <ButtonSet>
              <Tool $width={21} aria-label="Decrease indent"><IndentIcon /></Tool>
              <Tool aria-label="Increase indent"><IndentIcon more /></Tool>
            </ButtonSet>
          </ToolRow>
        </ToolRows>
      </RibbonGroup>

      <RibbonGroup name="Names" width={96}>
        <Big icon={<AddressBookIcon />} lines={['Address', 'Book']} width={44} />
        <Big icon={<CheckNamesIcon />} lines={['Check', 'Names']} width={44} />
      </RibbonGroup>

      <RibbonGroup name="Include" width={248} padding="0 2px" launcher="off">
        <Big icon={<AttachFileIcon />} lines={['Attach', 'File']} width={42} />
        <Big icon={<AttachItemIcon />} lines={['Attach', 'Item']} width={42} />
        <Big icon={<BusinessCardIcon />} lines={['Business', 'Card']} width={50} arrow="inline" />
        <Big icon={<CalendarIcon />} lines={['Calendar']} width={52} />
        <Big icon={<SignatureIcon />} lines={['Signature']} width={54} arrow="below" />
      </RibbonGroup>

      <RibbonGroup name="Options" width={170} launcher="on">
        <Big icon={<FlagIcon />} lines={['Follow', 'Up']} width={40} arrow="inline" />
        <Divider />
        <SmallColumn>
          <SmallButton><PermissionIcon />Permission&nbsp;<DownArrow /></SmallButton>
          <SmallButton><HighIcon />High Importance</SmallButton>
          <SmallButton><LowIcon />Low Importance</SmallButton>
        </SmallColumn>
      </RibbonGroup>

      <RibbonGroup name="Proofing" width={55}>
        <Big icon={<SpellingIcon />} lines={['Spelling']} width={47} arrow="below" />
      </RibbonGroup>
    </Ribbon>
  </RibbonArea>
);

const App = () => (
  <Window>
    <GlobalStyle />
    <TitleBar>
      <OfficeButton aria-label="Office"><OfficeOrb /></OfficeButton>
      <QuickAccess>
        <QuickPill>
          <IconButton aria-label="Save"><SaveIcon /></IconButton>
          <IconButton aria-label="Undo"><UndoIcon /></IconButton>
          <IconButton aria-label="Redo"><RedoIcon /></IconButton>
          <IconButton aria-label="Previous"><NavIcon /></IconButton>
          <IconButton aria-label="Next"><NavIcon down /></IconButton>
        </QuickPill>
        <IconButton aria-label="Customise">
          <Icon w={6} h={7}><path d="M0 .5h6M0 3h6L3 6z" fill="#15428b" stroke="#15428b" strokeWidth=".8" /></Icon>
        </IconButton>
      </QuickAccess>
      <Title>RE: Highlands End Holiday Park - A178 - <span>Message (HTML)</span></Title>
      <WindowButtons>
        <IconButton aria-label="Minimise"><Icon><path d="M5 10h7v2H5z" fill="#5f6b80" /></Icon></IconButton>
        <IconButton aria-label="Restore">
          <Icon>
            <path d="M6 4.500h8M13.500 4v5" stroke="#5f6b80" fill="none" strokeWidth="1.600" />
            <path d="M4.500 6.500h7v5h-7z" fill="#e3edfa" stroke="#6e7b92" />
            <path d="M4 7h8" stroke="#6e7b92" strokeWidth="2" />
          </Icon>
        </IconButton>
        <IconButton aria-label="Close"><Icon><path d="M4 4l8 8M12 4l-8 8" stroke="#6e7b92" strokeWidth="2.200" /></Icon></IconButton>
      </WindowButtons>
    </TitleBar>

    <TabBar>
      {tabs.map((tab, i) => <Tab key={tab} $active={i === 0}>{tab}</Tab>)}
      <HelpButton aria-label="Help"><HelpIcon /></HelpButton>
    </TabBar>

    <RibbonBar />

    <Envelope onSubmit={e => e.preventDefault()}>
      <SendButton type="submit"><SendIcon />Send</SendButton>
      <Fields>
        <FieldButton type="button">To...</FieldButton>
        <Field name="to" aria-label="To" defaultValue="Holiday Home Sales at WDLH <office2@wdlh.co.uk>" />
        <FieldButton type="button">Cc...</FieldButton>
        <Field name="cc" aria-label="Cc" />
        <SubjectLabel htmlFor="subject">Subject:</SubjectLabel>
        <Field id="subject" name="subject" defaultValue="RE: Highlands End Holiday Park - A178" />
      </Fields>
    </Envelope>

    <Editor>
      <Message>
        <Paragraph>Hi Val,</Paragraph>
        <Paragraph>I have put the quote in the post today.</Paragraph>
        <Paragraph>Kindest regards<Caret /></Paragraph>
        <Signature>Adrienne</Signature>
        <Sender>{'Adrienne Barwell\nCUSTOMER CARE MANAGER'}</Sender>
        <QuotedHeader>
          {quoted.map(([label, value]) => <div key={label}><b>{label}</b> {value}</div>)}
        </QuotedHeader>
        <Paragraph>Hi Adrienne,</Paragraph>
        <Paragraph>
          Could I have an update on this one please?&nbsp; Also we believe the floor inside the front door to be very bad – could you ask Steve to Brace it for us ready for the park opening.
        </Paragraph>
        <Paragraph>{'Val Walbridge\nSales Co-Ordinator'}</Paragraph>
        <Paragraph>
          {'for Martin J Cox\nWest Dorset Leisure Holidays\nCaravan Sales 01308 426917\nReception 01308 422139\n'}
          <WebLink href="#">www.wdlh.co.uk</WebLink>
        </Paragraph>
        <Social>
          <SocialLink href="#" aria-label="Twitter"><TwitterIcon /></SocialLink>
          <SocialLink href="#" aria-label="Facebook"><FacebookIcon /></SocialLink>
          <SocialLink href="#" aria-label="RSS"><RssIcon /></SocialLink>
        </Social>
      </Message>
      <ScrollBar>
        <BrowseButton aria-label="Select browse object">
          <Icon w={9} h={2}><path d="M0 0h9v2H0z" fill="#3a4a6e" /></Icon>
          <Icon w={12} h={12}>
            <path d="M.5 2.500h3l1-2 2 2h5v7h-3v2h-3v-2h-5z" fill="#eef1f8" stroke="#46506e" />
            <path d="M3 4l1 2M7 6l2-2M6 8h3" stroke="#7580a0" />
          </Icon>
        </BrowseButton>
        <ArrowButton aria-label="Scroll up"><Icon w={9} h={5}><path d="M0 5h9L4.500 0z" fill="#3a4664" /></Icon></ArrowButton>
        <Thumb>
          <Icon w={7} h={8}><path d="M0 .5h7M0 2.500h7M0 4.500h7M0 6.500h7" stroke="#7f8ea8" /></Icon>
        </Thumb>
        <Track />
        <ArrowButton aria-label="Scroll down"><Icon w={9} h={5}><path d="M0 0h9L4.500 5z" fill="#3a4664" /></Icon></ArrowButton>
      </ScrollBar>
    </Editor>

    <Taskbar>
      <StartButton><WindowsFlag />start</StartButton>
      <QuickLaunch>
        <Grip />
        <QuickIcons>
          <ChromeIcon />
          <IeIcon />
          <OutlookIcon />
          <Chevrons>»</Chevrons>
        </QuickIcons>
        <Grip />
      </QuickLaunch>
      <Tasks>
        {tasks.map(task => <Task key={task.label} $active={task.active}>{task.icon}{task.label}</Task>)}
      </Tasks>
      <Tray>
        <button aria-label="Show hidden icons"><TrayArrow /></button>
        <OutlookIcon />
        <PresenceIcon />
        <NetworkIcon />
        <Clock>11:29</Clock>
      </Tray>
    </Taskbar>
  </Window>
);

export default App;
